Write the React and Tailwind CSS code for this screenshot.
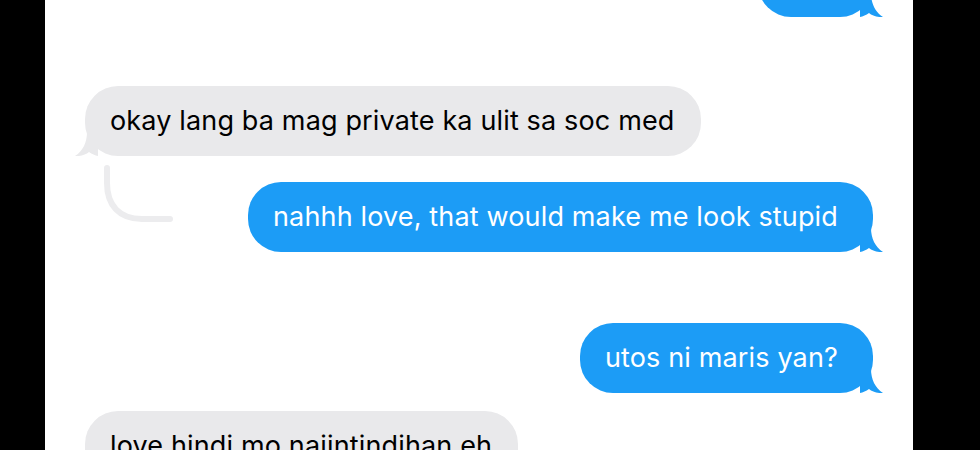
import React from 'react';

const BLUE = '#1c9cf6';
const GRAY = '#e9e9eb';

const Tail = ({ side, color }) => (
  <svg
    viewBox="0 0 24 24"
    className={`absolute bottom-0 h-[24px] w-[24px] ${side === 'right' ? 'right-[-11px]' : 'left-[-11px] -scale-x-100'}`}
  >
    <path d="M0 0 H11 C11 10 15 19 23 24 C17 24.5 12 22.5 9 20 C6 22 3 23.5 0 24 Z" fill={color} />
  </svg>
);

const Bubble = ({ from, children, className = '', boxClass = '' }) => {
  const mine = from === 'me';
  return (
    <div className={`flex ${mine ? 'justify-end' : 'justify-start'} ${className}`}>
      <div
        className={`relative rounded-[33px] py-[19px] text-[27px] leading-[32px] tracking-[0.15px] whitespace-nowrap ${
          mine ? 'bg-[#1c9cf6] pl-[25px] pr-[35px] text-white' : 'bg-[#e9e9eb] pl-[25px] pr-[26px] text-black'
        } ${boxClass}`}
      >
        {children}
        <Tail side={mine ? 'right' : 'left'} color={mine ? BLUE : GRAY} />
      </div>
    </div>
  );
};

export default function App() {
  return (
    <div
      className="flex h-[450px] w-[980px] overflow-hidden bg-black pl-[45px] pr-[67px]"
      style={{ fontFamily: 'Inter, "Noto Sans", sans-serif' }}
    >
      <div className="flex h-full flex-1 flex-col bg-white px-[40px]">
        {/* previous message, scrolled mostly out of view */}
        <Bubble from="me" className="mt-[-53px]" boxClass="h-[70px] w-[115px]" />

        <div className="relative mt-[69px] flex">
          <Bubble from="them">okay lang ba mag private ka ulit sa soc med</Bubble>
          {/* reply thread line */}
          <svg
            viewBox="0 0 72 60"
            className="absolute left-[19px] top-[calc(100%+9px)] h-[60px] w-[72px]"
          >
            <path
              d="M3 3 V18 C3 40 15 54 38 54 H66"
              fill="none"
              stroke="#ececee"
              strokeWidth="6"
              strokeLinecap="round"
            />
          </svg>
        </div>

        <Bubble from="me" className="mt-[26px]">
          nahhh love, that would make me look stupid
        </Bubble>

        <Bubble from="me" className="mt-[71px]">
          utos ni maris yan?
        </Bubble>

        <Bubble from="them" className="mt-[18px]">
          love hindi mo naiintindihan eh
        </Bubble>
      </div>
    </div>
  );
}
